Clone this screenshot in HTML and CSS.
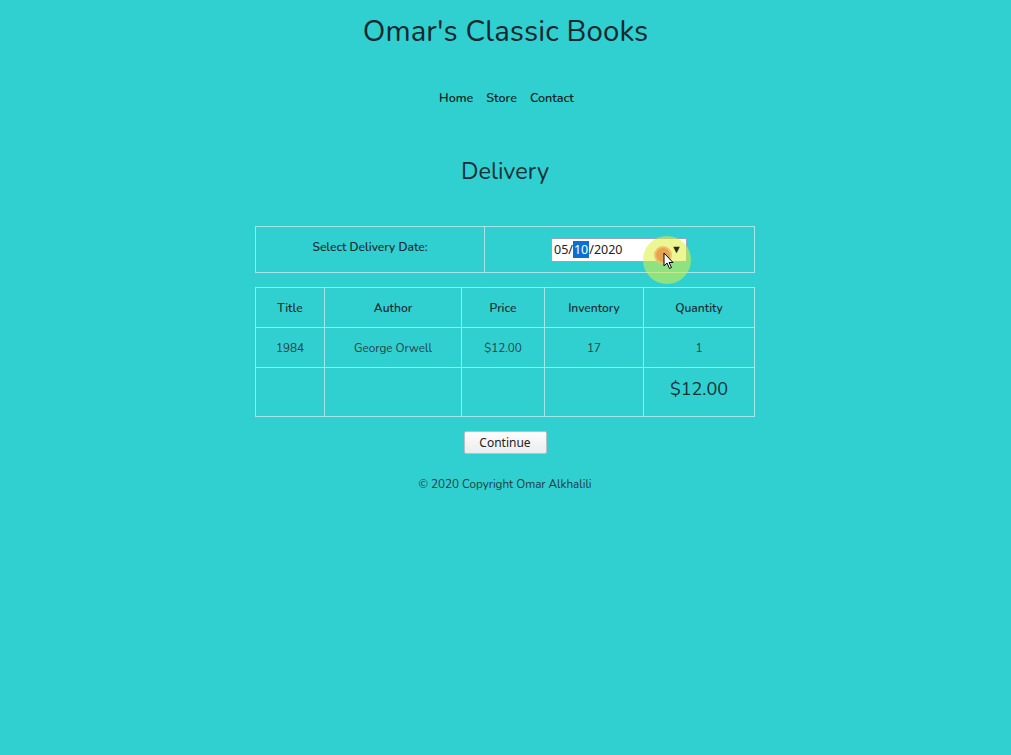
FILE: index.html
```html
<!DOCTYPE html>
<html>
<head>
<meta charset="utf-8">
<link rel="stylesheet" href="styles.css">
</head>
<body>
<header class="site-header">
  <h1 class="site-title">Omar's Classic Books</h1>
  <nav class="nav">
    <a href="#">Home</a>
    <a href="#">Store</a>
    <a href="#">Contact</a>
  </nav>
</header>
<main class="main">
  <h2 class="page-title">Delivery</h2>
  <table class="date-table">
    <tr>
      <td class="date-label">Select Delivery Date:</td>
      <td class="date-cell">
        <div class="date-input">
          <span class="date-text">05/<span class="sel">10</span>/2020</span>
          <span class="cursor-glow"></span>
          <span class="cursor-ring"></span>
          <span class="date-arrow">▼</span>
          <svg class="cursor" width="12" height="18" viewBox="0 0 12 18"><path d="M1 1 L1 14 L4 11 L6.5 16.5 L8.5 15.5 L6 10.5 L10 10.5 Z" fill="#fff" stroke="#000" stroke-width="1"/></svg>
        </div>
      </td>
    </tr>
  </table>
  <table class="cart">
    <tr class="head">
      <th class="c1">Title</th>
      <th class="c2">Author</th>
      <th class="c3">Price</th>
      <th class="c4">Inventory</th>
      <th class="c5">Quantity</th>
    </tr>
    <tr class="row">
      <td>1984</td>
      <td>George Orwell</td>
      <td>$12.00</td>
      <td>17</td>
      <td>1</td>
    </tr>
    <tr class="total">
      <td></td>
      <td></td>
      <td></td>
      <td></td>
      <td class="total-amt">$12.00</td>
    </tr>
  </table>
  <button class="btn">Continue</button>
  <footer class="footer">© 2020 Copyright Omar Alkhalili</footer>
</main>
</body>
</html>
```

FILE: styles.css
```css
html, body {
  margin: 0;
  padding: 0;
}
body {
  background: #30d0d1;
  font-family: "Nunito", "Lato", "Noto Sans", sans-serif;
  color: #13272e;
  min-height: 755px;
}
.site-header {
  text-align: center;
}
.site-title {
  margin: 0;
  padding-top: 13px;
  font-size: 29.4px;
  line-height: 36px;
  font-weight: 400;
  letter-spacing: 0.1px;
}
.nav {
  margin-top: 41px;
  display: flex;
  justify-content: center;
  gap: 13px;
  padding-left: 2px;
}
.nav a {
  color: #0e1d22;
  text-decoration: none;
  font-size: 12.5px;
  font-weight: 600;
  line-height: 16px;
}
.main {
  display: flex;
  flex-direction: column;
  align-items: center;
  padding-right: 1px;
}
.page-title {
  margin: 50px 0 0;
  font-size: 23.5px;
  line-height: 30px;
  font-weight: 400;
  color: #173038;
}
table {
  border-collapse: collapse;
  width: 500px;
}
td, th {
  border: 1px solid #a3e7e9;
  padding: 0;
  text-align: center;
}
.date-table {
  margin-top: 40px;
}
.date-table td {
  height: 45px;
}
.date-label {
  width: 228px;
  font-size: 12px;
  font-weight: 600;
  color: #1b2d33;
  vertical-align: top;
  padding-top: 12px !important;
  height: 33px !important;
}
.date-input {
  position: relative;
  display: flex;
  align-items: center;
  width: 134px;
  height: 22px;
  margin-left: 66px;
  background: #fff;
  border: 1px solid #8fa6c8;
  font-family: "Noto Sans", sans-serif;
  font-size: 12.5px;
  color: #222;
}
.date-text {
  padding-left: 2px;
  line-height: 17px;
}
.sel {
  background: #0b70d3;
  color: #fff;
  display: inline-block;
  padding: 0 1px;
}
.date-arrow {
  position: absolute;
  right: 4px;
  top: 3px;
  font-size: 11px;
  line-height: 14px;
  color: #2a2a08;
}
.cursor-glow {
  position: absolute;
  left: 91px;
  top: -3px;
  width: 48px;
  height: 48px;
  border-radius: 50%;
  background: rgba(220, 240, 60, 0.55);
}
.cursor-ring {
  position: absolute;
  left: 104px;
  top: 9px;
  width: 14px;
  height: 14px;
  border-radius: 50%;
  background: #e7a44a;
  box-shadow: 0 0 0 2px #f0c070;
}
.cursor {
  position: absolute;
  left: 111px;
  top: 13px;
}
.cart {
  margin-top: 14px;
}
.cart th {
  font-size: 12px;
  font-weight: 600;
  color: #1b2d33;
  height: 39px;
}
.cart .c1 { width: 68px; }
.cart .c2 { width: 136px; }
.cart .c3 { width: 82px; }
.cart .c4 { width: 98px; }
.cart td {
  font-size: 11.7px;
  color: #234047;
  height: 39px;
}
.cart .total td {
  height: 48px;
}
.total-amt {
  font-size: 18px !important;
  color: #173038 !important;
  vertical-align: top;
  padding-top: 9px !important;
  height: 39px !important;
}
.btn {
  margin-top: 14px;
  width: 83px;
  height: 23px;
  background: linear-gradient(#fdfdfd, #ececec);
  border: 1px solid #b9c0c4;
  border-radius: 2px;
  font-family: "Noto Sans", sans-serif;
  font-size: 12px;
  color: #222;
  padding: 0;
}
.footer {
  margin-top: 22px;
  font-size: 11.7px;
  color: #1f3a40;
}
```
